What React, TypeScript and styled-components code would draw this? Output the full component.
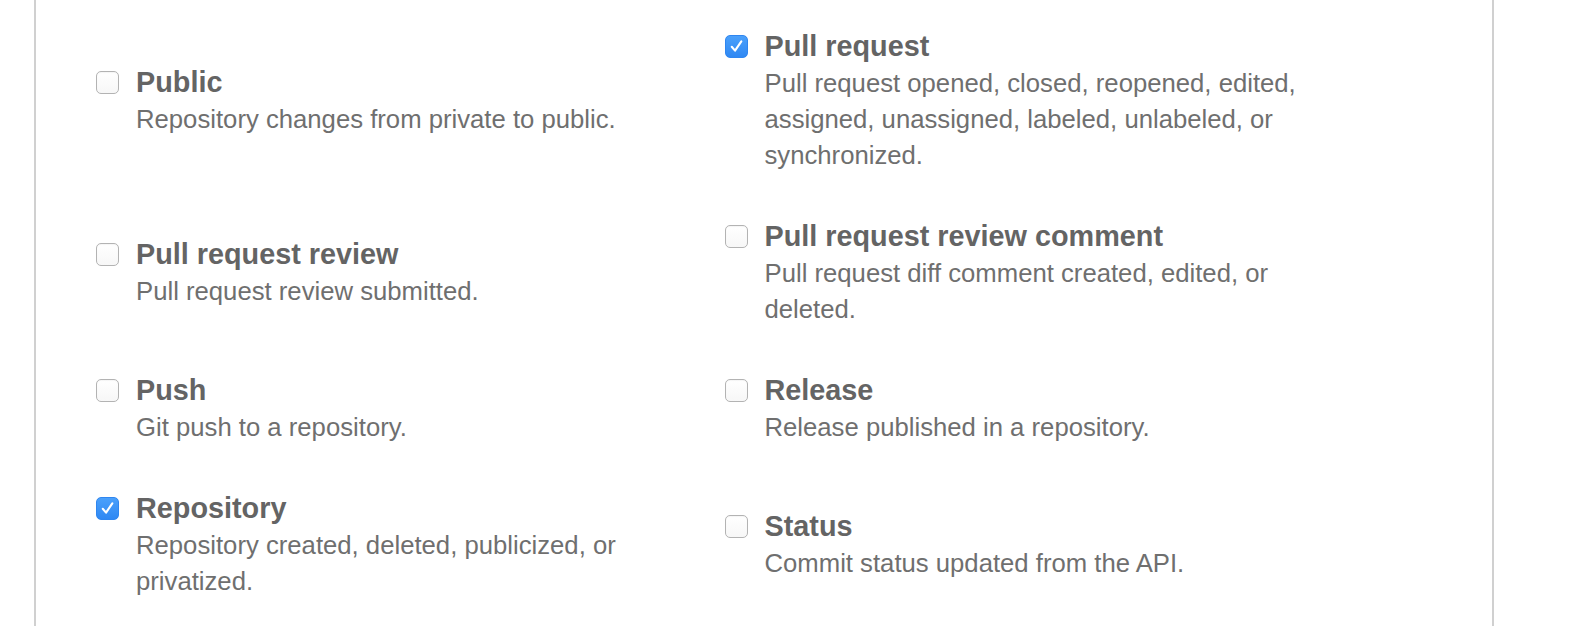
import React from "react";
import styled, { createGlobalStyle } from "styled-components";

const Global = createGlobalStyle`
  html, body { margin: 0; padding: 0; background: #ffffff; overflow: hidden; }
  body { font-family: "Liberation Sans", Arial, sans-serif; }
`;

const Page = styled.div`
  width: 1580px;
  height: 626px;
  background: #ffffff;
`;

const Panel = styled.section`
  box-sizing: border-box;
  margin-left: 34px;
  width: 1460px;
  height: 626px;
  border-left: 2px solid #d0d0d0;
  border-right: 2px solid #d0d0d0;
  padding: 27px 0 0 60px;
`;

const Grid = styled.div`
  display: grid;
  grid-template-columns: 628.5px 628.5px;
  row-gap: 44px;
  align-items: center;
`;

const Item = styled.label`
  display: flex;
  align-items: flex-start;
  gap: 17px;
`;

const Box = styled.span<{ $checked: boolean }>`
  box-sizing: border-box;
  flex: none;
  width: 23px;
  height: 23px;
  margin-top: 7.5px;
  border-radius: 5px;
  display: flex;
  align-items: center;
  justify-content: center;
  border: ${(p) => (p.$checked ? "1px solid #2f86f0" : "1px solid #b3b3b3")};
  background: ${(p) =>
    p.$checked
      ? "linear-gradient(#4aa0fb, #2f88f3)"
      : "linear-gradient(#ffffff, #f7f7f7)"};
  box-shadow: ${(p) => (p.$checked ? "none" : "inset 0 1px 1px rgba(0,0,0,0.04)")};
`;

const Text = styled.div`
  display: flex;
  flex-direction: column;
`;

const Title = styled.div`
  font-weight: 700;
  font-size: 28.8px;
  line-height: 38px;
  color: #646464;
`;

const Desc = styled.div`
  font-size: 25.7px;
  line-height: 36px;
  color: #6f6f6f;
  max-width: 570px;
`;

type Ev = { title: string; desc: string; checked?: boolean };

const events: Ev[] = [
  { title: "Public", desc: "Repository changes from private to public." },
  {
    title: "Pull request",
    desc: "Pull request opened, closed, reopened, edited, assigned, unassigned, labeled, unlabeled, or synchronized.",
    checked: true,
  },
  { title: "Pull request review", desc: "Pull request review submitted." },
  {
    title: "Pull request review comment",
    desc: "Pull request diff comment created, edited, or deleted.",
  },
  { title: "Push", desc: "Git push to a repository." },
  { title: "Release", desc: "Release published in a repository." },
  {
    title: "Repository",
    desc: "Repository created, deleted, publicized, or privatized.",
    checked: true,
  },
  { title: "Status", desc: "Commit status updated from the API." },
];

const Check = () => (
  <svg width="23" height="23" viewBox="0 0 23 23" style={{ display: "block" }}>
    <path
      d="M6.3 11.8 L9.9 16 L16.8 5.8"
      fill="none"
      stroke="#ffffff"
      strokeWidth="2.3"
      strokeLinecap="round"
      strokeLinejoin="round"
    />
  </svg>
);

export default function App() {
  return (
    <Page>
      <Global />
      <Panel>
        <Grid>
          {events.map((e) => (
            <Item key={e.title}>
              <Box $checked={!!e.checked}>{e.checked && <Check />}</Box>
              <Text>
                <Title>{e.title}</Title>
                <Desc>{e.desc}</Desc>
              </Text>
            </Item>
          ))}
        </Grid>
      </Panel>
    </Page>
  );
}
